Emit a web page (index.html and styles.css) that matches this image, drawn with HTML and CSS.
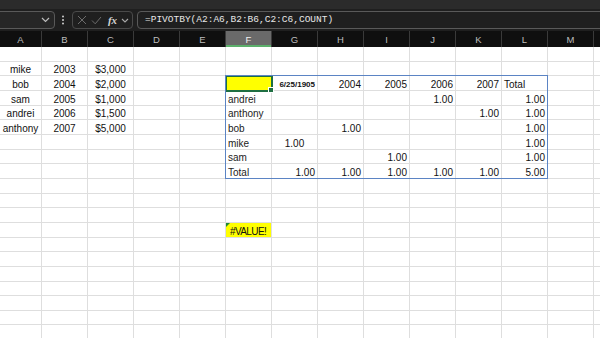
FILE: index.html
```html
<!DOCTYPE html>
<html lang="en">
<head>
    <meta charset="UTF-8">
    <meta name="viewport" content="width=device-width, initial-scale=1.0">
    <title>PIVOTBY - Excel</title>
    <link rel="stylesheet" href="styles.css">
</head>
<body>
    <div class="window">
        <div class="title-strip"></div>

        <div class="formula-bar">
            <div class="name-box">
                <svg class="chevron" width="9" height="6" viewBox="0 0 9 6"><path d="M1 1l3.5 3.5L8 1" fill="none" stroke="#bdbdbd" stroke-width="1.2"/></svg>
            </div>
            <svg class="more" width="4" height="10" viewBox="0 0 4 10"><circle cx="2" cy="1.5" r="1" fill="#cfcfcf"/><circle cx="2" cy="5" r="1" fill="#cfcfcf"/><circle cx="2" cy="8.5" r="1" fill="#cfcfcf"/></svg>
            <div class="fx-box">
                <svg width="10" height="10" viewBox="0 0 10 10"><path d="M1 1l8 8M9 1l-8 8" stroke="#6c6c6c" stroke-width="1"/></svg>
                <svg width="11" height="9" viewBox="0 0 11 9"><path d="M1 4.5l3.2 3.3L10 1" fill="none" stroke="#6c6c6c" stroke-width="1"/></svg>
                <span class="fx">fx</span>
                <svg width="8" height="5" viewBox="0 0 8 5"><path d="M1 1l3 3 3-3" fill="none" stroke="#a8a8a8" stroke-width="1.1"/></svg>
            </div>
            <div class="formula">=PIVOTBY(A2:A6,B2:B6,C2:C6,COUNT)</div>
        </div>

        <table class="sheet">
            <colgroup>
                <col class="col-a"><col><col><col><col><col><col><col><col><col><col><col><col><col>
            </colgroup>
            <thead>
                <tr><th>A</th><th>B</th><th>C</th><th>D</th><th>E</th><th class="active">F</th><th>G</th><th>H</th><th>I</th><th>J</th><th>K</th><th>L</th><th>M</th><th></th></tr>
            </thead>
            <tbody>
                <tr><td></td><td></td><td></td><td></td><td></td><td></td><td></td><td></td><td></td><td></td><td></td><td></td><td></td><td></td></tr>
                <tr><td class="c">mike</td><td class="c">2003</td><td class="c">$3,000</td><td></td><td></td><td></td><td></td><td></td><td></td><td></td><td></td><td></td><td></td><td></td></tr>
                <tr><td class="c">bob</td><td class="c">2004</td><td class="c">$2,000</td><td></td><td></td><td class="spill selected"></td><td class="r date-head">6/25/1905</td><td class="r">2004</td><td class="r">2005</td><td class="r">2006</td><td class="r">2007</td><td>Total</td><td></td><td></td></tr>
                <tr><td class="c">sam</td><td class="c">2005</td><td class="c">$1,000</td><td></td><td></td><td class="pv">andrei</td><td></td><td></td><td></td><td class="r">1.00</td><td></td><td class="r">1.00</td><td></td><td></td></tr>
                <tr><td class="c">andrei</td><td class="c">2006</td><td class="c">$1,500</td><td></td><td></td><td class="pv">anthony</td><td></td><td></td><td></td><td></td><td class="r">1.00</td><td class="r">1.00</td><td></td><td></td></tr>
                <tr><td class="c">anthony</td><td class="c">2007</td><td class="c">$5,000</td><td></td><td></td><td class="pv">bob</td><td></td><td class="r">1.00</td><td></td><td></td><td></td><td class="r">1.00</td><td></td><td></td></tr>
                <tr><td></td><td></td><td></td><td></td><td></td><td class="pv">mike</td><td class="c">1.00</td><td></td><td></td><td></td><td></td><td class="r">1.00</td><td></td><td></td></tr>
                <tr><td></td><td></td><td></td><td></td><td></td><td class="pv">sam</td><td></td><td></td><td class="r">1.00</td><td></td><td></td><td class="r">1.00</td><td></td><td></td></tr>
                <tr><td></td><td></td><td></td><td></td><td></td><td class="pv">Total</td><td class="r">1.00</td><td class="r">1.00</td><td class="r">1.00</td><td class="r">1.00</td><td class="r">1.00</td><td class="r">5.00</td><td></td><td></td></tr>
                <tr><td></td><td></td><td></td><td></td><td></td><td></td><td></td><td></td><td></td><td></td><td></td><td></td><td></td><td></td></tr>
                <tr><td></td><td></td><td></td><td></td><td></td><td></td><td></td><td></td><td></td><td></td><td></td><td></td><td></td><td></td></tr>
                <tr><td></td><td></td><td></td><td></td><td></td><td></td><td></td><td></td><td></td><td></td><td></td><td></td><td></td><td></td></tr>
                <tr><td></td><td></td><td></td><td></td><td></td><td class="error">#VALUE!</td><td></td><td></td><td></td><td></td><td></td><td></td><td></td><td></td></tr>
                <tr><td></td><td></td><td></td><td></td><td></td><td></td><td></td><td></td><td></td><td></td><td></td><td></td><td></td><td></td></tr>
                <tr><td></td><td></td><td></td><td></td><td></td><td></td><td></td><td></td><td></td><td></td><td></td><td></td><td></td><td></td></tr>
                <tr><td></td><td></td><td></td><td></td><td></td><td></td><td></td><td></td><td></td><td></td><td></td><td></td><td></td><td></td></tr>
                <tr><td></td><td></td><td></td><td></td><td></td><td></td><td></td><td></td><td></td><td></td><td></td><td></td><td></td><td></td></tr>
                <tr><td></td><td></td><td></td><td></td><td></td><td></td><td></td><td></td><td></td><td></td><td></td><td></td><td></td><td></td></tr>
                <tr><td></td><td></td><td></td><td></td><td></td><td></td><td></td><td></td><td></td><td></td><td></td><td></td><td></td><td></td></tr>
                <tr><td></td><td></td><td></td><td></td><td></td><td></td><td></td><td></td><td></td><td></td><td></td><td></td><td></td><td></td></tr>
            </tbody>
        </table>
    </div>
</body>
</html>
```

FILE: styles.css
```css
:root {
    --row: 14.67px;
    --col: 46px;
}

body {
    margin: 0;
    background-color: #ffffff;
    font-family: 'Liberation Sans', Arial, sans-serif;
}

.window {
    width: 600px;
    height: 338px;
    overflow: hidden;
}

.title-strip {
    height: 9px;
    background-color: #2b2b2b;
}

/* formula bar */
.formula-bar {
    height: 22px;
    background-color: #1f1f1f;
    display: flex;
    align-items: center;
}

.name-box {
    box-sizing: border-box;
    width: 60px;
    height: 18px;
    margin-left: -5px;
    padding-right: 4px;
    border: 1px solid #595959;
    border-radius: 4px;
    background-color: #262626;
    display: flex;
    align-items: center;
    justify-content: flex-end;
}

.more {
    margin: 0 7px 0 6px;
}

.fx-box {
    box-sizing: border-box;
    width: 61px;
    height: 18px;
    padding: 0 3px 0 4px;
    border: 1px solid #4a4a4a;
    border-radius: 4px;
    display: flex;
    align-items: center;
    justify-content: space-between;
}

.fx {
    font-family: 'Liberation Serif', serif;
    font-style: italic;
    font-weight: bold;
    font-size: 11px;
    color: #d4d4d4;
    margin-left: 2px;
}

.formula {
    box-sizing: border-box;
    flex: 1;
    height: 18px;
    margin-left: 4px;
    margin-right: -10px;
    padding-left: 7px;
    border: 1px solid #595959;
    border-radius: 4px;
    font-family: 'Liberation Mono', 'DejaVu Sans Mono', monospace;
    font-size: 9.5px;
    line-height: 16px;
    color: #e6e6e6;
}

/* grid */
.sheet {
    border-collapse: separate;
    border-spacing: 0;
    table-layout: fixed;
    width: 640px;
}

.sheet col {
    width: var(--col);
}

.sheet col.col-a {
    width: 42px;
}

.sheet th {
    box-sizing: border-box;
    height: 16px;
    padding: 0;
    background-color: #0f0f0f;
    border-right: 1px solid #3a3a3a;
    color: #bdbdbd;
    font-size: 9.5px;
    font-weight: normal;
}

.sheet th.active {
    background-color: #6a6a6a;
    color: #f2f2f2;
    box-shadow: inset 0 -2px #5caf6b;
}

.sheet td {
    box-sizing: border-box;
    height: var(--row);
    padding: 0 2px;
    border-right: 1px solid #dedede;
    border-bottom: 1px solid #dedede;
    font-size: 10px;
    line-height: 10px;
    vertical-align: bottom;
    white-space: nowrap;
    color: #111111;
}

.sheet td.c {
    text-align: center;
}

.sheet td.r {
    text-align: right;
}

.sheet td.pv {
    color: #222222;
}

.sheet td.date-head {
    font-size: 8px;
    font-weight: bold;
    line-height: 10px;
}

/* spill range of the PIVOTBY formula */
.spill {
    position: relative;
}

.spill::after {
    content: '';
    position: absolute;
    left: -1px;
    top: -1px;
    box-sizing: border-box;
    width: calc(7 * var(--col) + 1px);
    height: calc(7 * var(--row) + 1px);
    border: 1px solid #5b84c4;
    pointer-events: none;
}

.sheet td.selected {
    background-color: #ffff00;
    outline: 2px solid #1f6f43;
    outline-offset: -1px;
}

.selected::before {
    content: '';
    position: absolute;
    right: -3px;
    bottom: -3px;
    width: 4px;
    height: 4px;
    background-color: #1f6f43;
    border: 1px solid #ffffff;
    z-index: 1;
}

.sheet td.error {
    position: relative;
    padding-left: 4px;
    background-color: #ffff00;
    letter-spacing: -0.6px;
}

.error::before {
    content: '';
    position: absolute;
    left: 0;
    top: 0;
    border-top: 4px solid #1e8b3a;
    border-right: 4px solid transparent;
}
```
